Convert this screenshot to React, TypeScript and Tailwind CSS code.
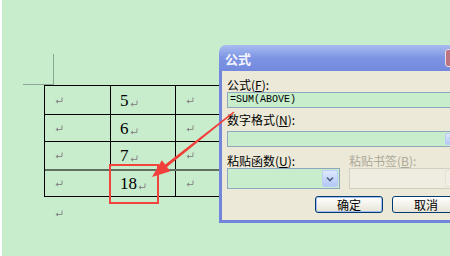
import React from 'react';

const cjk = "font-['SimSun','Noto_Sans_CJK_SC',sans-serif]";

const ReturnMark: React.FC = () => (
  <svg width="8" height="7" viewBox="0 0 8 7" className="inline-block shrink-0">
    <path d="M7 0.5 V4.5 H2" stroke="#8a8a8a" strokeWidth="1" fill="none" />
    <path d="M0.5 4.5 L3 2.6 L3 6.4 Z" fill="#8a8a8a" />
  </svg>
);

const Cell: React.FC<{ w: string; value?: string }> = ({ w, value }) => (
  <div className={`${w} h-full border-r border-black flex items-center pl-[9px]`}>
    {value ? (
      <span className="flex items-center font-['Liberation_Serif',serif] text-[17px] leading-none text-black">
        {value}
        <span className="ml-[1px] mt-[3px]">
          <ReturnMark />
        </span>
      </span>
    ) : (
      <span className="pl-[1px] flex">
        <ReturnMark />
      </span>
    )}
  </div>
);

const rows = [
  { h: 'h-[29px] border-b border-black', v: '5' },
  { h: 'h-[27px] border-b border-black', v: '6' },
  { h: 'h-[29px] border-b-2 border-[#5f6f62]', v: '7' },
  { h: 'h-[26px] border-b border-black', v: '18' },
];

const Chevron: React.FC<{ color: string }> = ({ color }) => (
  <svg width="8" height="6" viewBox="0 0 8 6">
    <path d="M1 1.5 L4 4.5 L7 1.5" stroke={color} strokeWidth="1.6" fill="none" />
  </svg>
);

const DropButton: React.FC<{ disabled?: boolean }> = ({ disabled }) => (
  <div
    className={`w-[16px] h-full flex items-center justify-center rounded-[2px] border ${
      disabled
        ? 'border-[#e4e2d6] bg-[#f1efe5]'
        : 'border-[#b9cdf6] bg-linear-to-b from-[#dde8fe] to-[#b4c8f5]'
    }`}
  >
    <Chevron color={disabled ? '#c9c7ba' : '#4d6185'} />
  </div>
);

const App: React.FC = () => {
  return (
    <div className="relative w-[450px] h-[256px] overflow-hidden bg-[#c7edcc] border-l-2 border-white">
      {/* page boundary mark */}
      <div className="ml-[21px] mt-[54px] w-[31px] h-[31px] border-r border-b border-[#8da593]" />

      {/* table */}
      <div className="ml-[42px] w-[240px] border-l border-t border-black">
        {rows.map((r) => (
          <div key={r.v} className={`flex ${r.h}`}>
            <Cell w="w-[66px]" />
            <Cell w="w-[65px]" value={r.v} />
            <Cell w="w-[65px]" />
          </div>
        ))}
      </div>
      <div className="ml-[53px] mt-[13px] flex">
        <ReturnMark />
      </div>

      {/* red highlight box */}
      <div className="absolute left-[107px] top-[164px] w-[50px] h-[40px] border-2 border-[#f2433f]" />

      {/* formula dialog */}
      <div className={`absolute left-[217px] top-[45px] w-[252px] flex flex-col ${cjk}`}>
        <div className="h-[26px] rounded-t-[7px] bg-linear-to-b from-[#a9bcf0] via-[#7d94e4] to-[#7389de] flex items-center justify-between pl-[6px] pr-[5px]">
          <span className="text-[13px] font-bold text-[#f4f6ff] leading-none">公式</span>
          <div className="w-[21px] h-[18px] rounded-[3px] bg-[#bd7482] border border-[#eadbe0] flex items-center justify-center">
            <svg width="9" height="9" viewBox="0 0 9 9">
              <path d="M1 1 L8 8 M8 1 L1 8" stroke="white" strokeWidth="2" />
            </svg>
          </div>
        </div>
        <div className="bg-[#ece9d8] border-x-[3px] border-b-[3px] border-[#7185da] px-[5px] pt-[7px] pb-[7px] text-[12px] leading-[14px] text-black">
          <div>
            公式(<span className="underline">F</span>):
          </div>
          <div className="h-[16px] border border-[#8fa7bd] bg-[#c7edcc] flex items-center pl-[2px] font-['Liberation_Mono',monospace] text-[10px]">
            =SUM(ABOVE)
          </div>

          <div className="mt-[5px]">
            数字格式(<span className="underline">N</span>):
          </div>
          <div className="mt-[4px] h-[16px] border border-[#8fa7bd] bg-[#c7edcc] flex justify-end p-[1px]">
            <DropButton />
          </div>

          <div className="mt-[7px] flex">
            <div className="w-[113px]">
              <div>
                粘贴函数(<span className="underline">U</span>):
              </div>
              <div className="h-[21px] border border-[#8fa7bd] bg-[#c7edcc] flex justify-end p-[1px]">
                <DropButton />
              </div>
            </div>
            <div className="ml-[9px] flex-1">
              <div className="text-[#aca899]">
                粘贴书签(<span className="underline">B</span>):
              </div>
              <div className="h-[21px] border border-[#d3d0c2] bg-[#efede2] flex justify-end p-[1px]">
                <DropButton disabled />
              </div>
            </div>
          </div>

          <div className="mt-[7px] flex gap-[9px] pl-[88px]">
            <div className="w-[68px] h-[17px] rounded-[3px] border border-[#003c74] bg-linear-to-b from-white to-[#e6e3d5] shadow-[inset_0_0_0_1px_#a5bdf0] flex items-center justify-center">
              确定
            </div>
            <div className="w-[68px] h-[17px] rounded-[3px] border border-[#003c74] bg-linear-to-b from-white to-[#e6e3d5] flex items-center justify-center">
              取消
            </div>
          </div>
        </div>
      </div>

      {/* arrow */}
      <svg className="absolute left-0 top-0 pointer-events-none" width="450" height="256" viewBox="0 0 450 256">
        <polygon
          points="231.5,111.4 163.2,164.6 159.8,160.3 150,177 168.5,171.3 165,167 232.5,112.6"
          fill="#f1403c"
        />
      </svg>
    </div>
  );
};

export default App;
